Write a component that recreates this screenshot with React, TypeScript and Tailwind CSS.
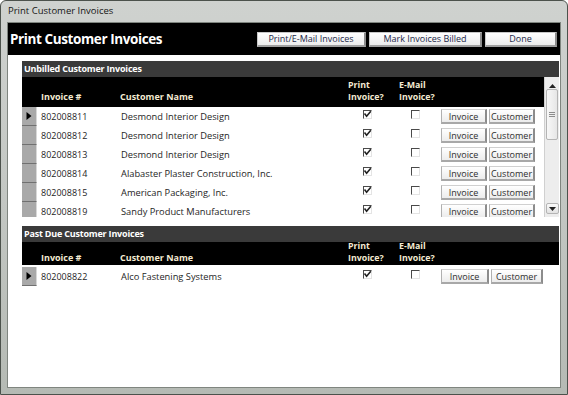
import React from "react";

const FONT = { fontFamily: '"Open Sans", "Noto Sans", sans-serif' };

function Check({ checked }: { checked: boolean }) {
  return (
    <div className="relative w-[9px] h-[9px] border-t border-l border-t-[#4a4a4a] border-l-[#4a4a4a] border-r border-b border-r-[#e4e4e4] border-b-[#e4e4e4] bg-white">
      {checked && (
        <svg width="9" height="9" viewBox="0 0 9 9" className="absolute left-[-1px] top-[-1px]">
          <path d="M1.5 3.5 L3.6 6.2 L7.8 1.2" fill="none" stroke="#222" strokeWidth="1.6" />
        </svg>
      )}
    </div>
  );
}

function Btn({ label, w }: { label: string; w: string }) {
  return (
    <div
      className={`${w} h-[15px] flex items-center justify-center text-[9px] text-[#2e2e2e] bg-gradient-to-b from-white to-[#ececec] border-t border-l border-t-[#d0d0d0] border-l-[#b0b0b0] border-r-2 border-b-2 border-r-[#8c8c8c] border-b-[#a8a8a8] leading-none`}
    >
      {label}
    </div>
  );
}

function Row({
  inv,
  name,
  current,
  wide,
}: {
  inv: string;
  name: string;
  current?: boolean;
  wide?: boolean;
}) {
  return (
    <div className="flex h-[19px] items-start bg-white shrink-0">
      <div className="w-[15px] h-[19px] bg-[#a9a9a9] border-b border-b-[#707070] border-r border-r-[#d8d8d8] flex items-center justify-center shrink-0">
        {current && (
          <svg width="6" height="8" viewBox="0 0 6 8">
            <path d="M0.5 0 L5.5 4 L0.5 8 Z" fill="#000" />
          </svg>
        )}
      </div>
      <div className="w-[4px] shrink-0" />
      <div className="w-[80px] h-[19px] flex items-center text-[9px] text-[#1e1e1e] shrink-0">{inv}</div>
      <div className="w-[241px] h-[19px] flex items-center text-[9.3px] text-[#1e1e1e] shrink-0 whitespace-nowrap">{name}</div>
      <div className="w-[49px] pt-[3px] pl-[1px] shrink-0">
        <Check checked />
      </div>
      <div className="w-[29px] pt-[3px] shrink-0">
        <Check checked={false} />
      </div>
      <div className="flex pt-[2px] gap-[2px] pl-[1px] shrink-0">
        <Btn label="Invoice" w={wide ? "w-[48px]" : "w-[46px]"} />
        <Btn label="Customer" w={wide ? "w-[52px]" : "w-[46px]"} />
      </div>
    </div>
  );
}

function ColHeader({ h, pb }: { h: string; pb: string }) {
  return (
    <div className={`flex ${h} shrink-0 bg-black items-end ${pb} text-[8.8px] font-bold text-[#f3ead2] leading-[12px]`}>
      <div className="w-[19px] shrink-0" />
      <div className="w-[79px] shrink-0 text-[9px]">Invoice #</div>
      <div className="w-[228px] shrink-0 text-[9px]">Customer Name</div>
      <div className="w-[51px] shrink-0">
        <div>Print</div>
        <div>Invoice?</div>
      </div>
      <div className="w-[60px] shrink-0">
        <div>E-Mail</div>
        <div>Invoice?</div>
      </div>
    </div>
  );
}

function SectionTitle({ title }: { title: string }) {
  return (
    <div className="h-[16px] shrink-0 bg-[#3a3a3a] flex items-center pl-[2px] text-[9px] font-bold text-white tracking-[-0.2px]">
      {title}
    </div>
  );
}

function ScrollBar() {
  return (
    <div className="w-[15px] h-[140px] bg-[#ededed] border-l border-[#d0d0d0] flex flex-col items-center shrink-0">
      <div className="h-[11px] w-full flex items-end justify-center">
        <svg width="7" height="4" viewBox="0 0 7 4">
          <path d="M0 4 L3.5 0 L7 4 Z" fill="#222" />
        </svg>
      </div>
      <div className="mt-[1px] w-[12px] h-[51px] bg-gradient-to-r from-[#f8f8f8] to-[#e6e6e6] border border-[#b4b4b4] rounded-[2px] flex flex-col items-center justify-center gap-[1px]">
        <div className="w-[6px] h-[1px] bg-[#8c8c8c]" />
        <div className="w-[6px] h-[1px] bg-[#8c8c8c]" />
        <div className="w-[6px] h-[1px] bg-[#8c8c8c]" />
      </div>
      <div className="flex-1" />
      <div className="w-[13px] h-[11px] mb-[3px] bg-gradient-to-b from-[#fafafa] to-[#e2e2e2] border border-[#b4b4b4] rounded-[2px] flex items-center justify-center">
        <svg width="7" height="4" viewBox="0 0 7 4">
          <path d="M0 0 L3.5 4 L7 0 Z" fill="#222" />
        </svg>
      </div>
    </div>
  );
}

const rows1 = [
  ["802008811", "Desmond Interior Design"],
  ["802008812", "Desmond Interior Design"],
  ["802008813", "Desmond Interior Design"],
  ["802008814", "Alabaster Plaster Construction, Inc."],
  ["802008815", "American Packaging, Inc."],
  ["802008819", "Sandy Product Manufacturers"],
];

const topBtn =
  "h-[15px] flex items-center justify-center text-[9px] text-[#1c2848] bg-gradient-to-b from-white to-[#ececec] border-t border-l border-[#c8c8c8] border-r-2 border-b-2 border-r-[#8c8c8c] border-b-[#a0a0a0]";

export default function App() {
  return (
    <div
      className="w-[568px] h-[395px] bg-gradient-to-b from-[#cfd2cf] via-[#c3c7c3] to-[#b5bab4] border border-[#4c524c] rounded-t-[6px] flex flex-col overflow-hidden"
      style={FONT}
    >
      <div className="h-[21px] flex items-center pl-[7px] text-[9.5px] text-[#151515] shrink-0">
        Print Customer Invoices
      </div>
      <div className="ml-[6px] mr-[6px] h-[366px] bg-white border border-[#7f857f] flex flex-col">
        <div className="h-[32px] bg-black flex items-center shrink-0">
          <div className="pl-[2px] text-[13.5px] font-bold text-white tracking-[-0.4px] flex-1">
            Print Customer Invoices
          </div>
          <div className="flex gap-[3px] pr-[3px]">
            <div className={`w-[109px] ${topBtn}`}>Print/E-Mail Invoices</div>
            <div className={`w-[113px] ${topBtn}`}>Mark Invoices Billed</div>
            <div className={`w-[72px] ${topBtn}`}>Done</div>
          </div>
        </div>

        <div className="ml-[14px] mr-[1px] mt-[6px] flex flex-col">
          <SectionTitle title="Unbilled Customer Invoices" />
          <div className="flex h-[140px]">
            <div className="flex-1 flex flex-col overflow-hidden">
              <ColHeader h="h-[30px]" pb="pb-[4px]" />
              {rows1.map(([inv, name], i) => (
                <Row key={inv} inv={inv} name={name} current={i === 0} />
              ))}
            </div>
            <ScrollBar />
          </div>

          <div className="mt-[9px]">
            <SectionTitle title="Past Due Customer Invoices" />
            <ColHeader h="h-[23px]" pb="pb-[1px]" />
            <div className="pt-[2px]">
              <Row inv="802008822" name="Alco Fastening Systems" current wide />
            </div>
          </div>
        </div>
      </div>
    </div>
  );
}
